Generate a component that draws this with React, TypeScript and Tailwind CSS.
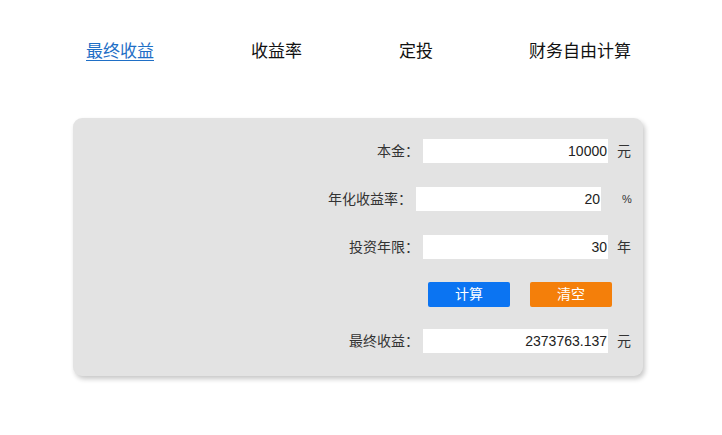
import React from "react";

const font = { fontFamily: '"Liberation Sans", "Noto Sans CJK SC", sans-serif' };

function Row({ label, value, unit, pct = false }: { label: string; value: string; unit: string; pct?: boolean }) {
  return (
    <div className="flex h-[24px] items-center justify-end pr-[12px]">
      <span className="text-[14px] leading-none text-[#333]">{label}</span>
      <div className="ml-[4px] flex h-[24px] w-[185px] items-center justify-end bg-white pr-[1px] text-[14px] text-[#222]">
        {value}
      </div>
      {pct ? (
        <span className="ml-[21px] mr-[1px] w-[8px] text-[11px] leading-none text-[#333]">%</span>
      ) : (
        <span className="ml-[9px] text-[14px] leading-none text-[#333]">{unit}</span>
      )}
    </div>
  );
}

export default function App() {
  return (
    <div className="h-[435px] w-[722px] bg-white" style={font}>
      <nav className="flex items-center pl-[86px] pt-[40px] text-[17px] leading-[24px] text-[#111]">
        <a className="text-[#1f6fc6] underline underline-offset-[3px]">最终收益</a>
        <span className="ml-[97px]">收益率</span>
        <span className="ml-[97px]">定投</span>
        <span className="ml-[96px]">财务自由计算</span>
      </nav>
      <div className="ml-[73px] mt-[54px] h-[258px] w-[570px] rounded-[9px] bg-[#e3e3e3] pt-[21px] shadow-[2px_3px_5px_rgba(0,0,0,0.22)]">
        <Row label="本金：" value="10000" unit="元" />
        <div className="mt-[24px]">
          <Row label="年化收益率：" value="20" unit="%" pct />
        </div>
        <div className="mt-[24px]">
          <Row label="投资年限：" value="30" unit="年" />
        </div>
        <div className="mt-[23px] flex h-[25px] justify-end gap-[20px] pr-[31px]">
          <button className="h-[25px] w-[82px] rounded-[2px] bg-[#0b74f2] text-[14px] text-white">计算</button>
          <button className="h-[25px] w-[82px] rounded-[2px] bg-[#f47f0a] text-[14px] text-white">清空</button>
        </div>
        <div className="mt-[22px]">
          <Row label="最终收益：" value="2373763.137" unit="元" />
        </div>
      </div>
    </div>
  );
}
